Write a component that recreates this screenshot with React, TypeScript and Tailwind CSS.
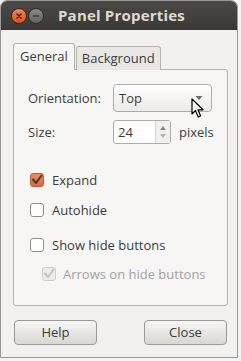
import React from "react";

const font = { fontFamily: '"Open Sans", "Noto Sans", "DejaVu Sans", sans-serif' };

function Check({ checked, disabled, orange }: { checked?: boolean; disabled?: boolean; orange?: boolean }) {
  const cls = orange
    ? "bg-gradient-to-b from-[#f08a5d] to-[#e0683a] border-[#c05a30]"
    : disabled
    ? "bg-[#ebebea] border-[#cfcecb]"
    : "bg-white border-[#8f8d88]";
  return (
    <div className={`w-[14px] h-[14px] rounded-[3px] border ${cls} flex items-center justify-center shrink-0`}>
      {checked && (
        <svg width="12" height="12" viewBox="0 0 12 12">
          <path
            d="M2 5.5 L5 9 L10.5 1.5"
            fill="none"
            stroke={disabled ? "#c3c2bf" : "#4a3a33"}
            strokeWidth="2"
            strokeLinecap="round"
            strokeLinejoin="round"
          />
        </svg>
      )}
    </div>
  );
}

export default function App() {
  return (
    <div className="w-[241px] h-[361px] bg-[#f4f4f4] overflow-hidden" style={font}>
      <div className="w-[238px] h-[358px] bg-[#f2f1f0] border border-[#9a9996] rounded-t-[7px] flex flex-col overflow-hidden">
        {/* title bar */}
        <div className="h-[29px] shrink-0 bg-gradient-to-b from-[#4a4945] to-[#3a3935] flex items-center pl-[10px]">
          <div className="w-[16px] h-[16px] rounded-full bg-gradient-to-b from-[#f6854f] to-[#d9501e] border border-[#3a2a20] flex items-center justify-center">
            <svg width="8" height="8" viewBox="0 0 8 8">
              <path d="M2 2 L6 6 M6 2 L2 6" stroke="#3a2216" strokeWidth="1.6" strokeLinecap="round" />
            </svg>
          </div>
          <div className="ml-[1px] w-[16px] h-[16px] rounded-full bg-gradient-to-b from-[#8a8985] to-[#64635f] border border-[#2e2d2a] flex items-center justify-center">
            <svg width="8" height="8" viewBox="0 0 8 8">
              <path d="M1.5 4 L6.5 4" stroke="#3a3935" strokeWidth="1.6" strokeLinecap="round" />
            </svg>
          </div>
          <span className="ml-[14px] text-[15px] font-bold text-[#dfdbd2] tracking-[0.2px]">Panel Properties</span>
        </div>

        {/* body */}
        <div className="flex-1 flex flex-col pl-[12px] pr-[9px] pt-[13px]">
          {/* tabs */}
          <div className="flex items-end h-[27px] relative z-10">
            <div className="h-[27px] px-[6px] border border-b-0 border-[#b5b3ae] rounded-t-[3px] bg-[#f7f6f5] flex items-center text-[13px] text-[#3c3c3c]">
              General
            </div>
            <div className="ml-[1px] h-[24px] px-[5px] border border-b-0 border-[#b5b3ae] rounded-t-[3px] bg-[#e9e8e6] flex items-center text-[13px] text-[#3c3c3c]">
              Background
            </div>
          </div>
          <div className="-mt-[1px] h-[237px] border border-[#b5b3ae] rounded-b-[3px] rounded-tr-[3px] bg-[#f7f6f5] pl-[14px] pt-[14px] text-[13px] leading-[16px] text-[#3c3c3c] relative">
            {/* orientation */}
            <div className="flex items-center h-[28px]">
              <span className="w-[85px]">Orientation:</span>
              <div className="w-[99px] h-[28px] rounded-[4px] border border-[#aeaca7] bg-gradient-to-b from-[#ffffff] to-[#ecebea] flex items-center pl-[5px] pr-[8px]">
                <span className="flex-1">Top</span>
                <svg width="8" height="6" viewBox="0 0 8 6">
                  <path d="M0.5 1 L7.5 1 L4 5 Z" fill="#6b6a67" />
                </svg>
              </div>
            </div>
            {/* size */}
            <div className="flex items-center h-[24px] mt-[8px]">
              <span className="w-[85px]">Size:</span>
              <div className="w-[58px] h-[24px] rounded-[3px] border border-[#aeaca7] bg-white flex">
                <div className="flex-1 flex items-center pl-[4px]">24</div>
                <div className="w-[15px] border-l border-[#d6d5d2] bg-[#f1f0ef] flex flex-col items-center justify-center gap-[4px]">
                  <svg width="6" height="4" viewBox="0 0 6 4">
                    <path d="M0 4 L6 4 L3 0 Z" fill="#8a8986" />
                  </svg>
                  <svg width="6" height="4" viewBox="0 0 6 4">
                    <path d="M0 0 L6 0 L3 4 Z" fill="#b0afac" />
                  </svg>
                </div>
              </div>
              <span className="ml-[8px]">pixels</span>
            </div>

            {/* checkboxes */}
            <div className="flex items-center gap-[8px] h-[14px] mt-[29px] pl-[2px]">
              <Check checked orange />
              <span>Expand</span>
            </div>
            <div className="flex items-center gap-[8px] h-[14px] mt-[16px] pl-[2px]">
              <Check />
              <span>Autohide</span>
            </div>
            <div className="flex items-center gap-[8px] h-[14px] mt-[21px] pl-[2px]">
              <Check />
              <span>Show hide buttons</span>
            </div>
            <div className="flex items-center gap-[7px] h-[14px] mt-[15px] pl-[14px]">
              <Check checked disabled />
              <span className="text-[#a3a2a0]">Arrows on hide buttons</span>
            </div>

            {/* cursor */}
            <svg className="absolute left-[177px] top-[28px]" width="13" height="21" viewBox="0 0 13 21">
              <path
                d="M1 1 L1 16 L4.5 12.5 L7.2 19 L9.6 18 L7 11.8 L12 11.8 Z"
                fill="#ffffff"
                stroke="#000000"
                strokeWidth="1.2"
                strokeLinejoin="round"
              />
            </svg>
          </div>

          {/* buttons */}
          <div className="flex justify-between mt-[14px] pr-[1px] pl-[1px]">
            <button className="w-[83px] h-[25px] rounded-[4px] border border-[#9c9a96] bg-gradient-to-b from-[#f6f6f5] to-[#d8d7d4] text-[13px] text-[#3c3c3c]">
              Help
            </button>
            <button className="w-[83px] h-[25px] rounded-[4px] border border-[#9c9a96] bg-gradient-to-b from-[#f6f6f5] to-[#d8d7d4] text-[13px] text-[#3c3c3c]">
              Close
            </button>
          </div>
        </div>
      </div>
    </div>
  );
}
